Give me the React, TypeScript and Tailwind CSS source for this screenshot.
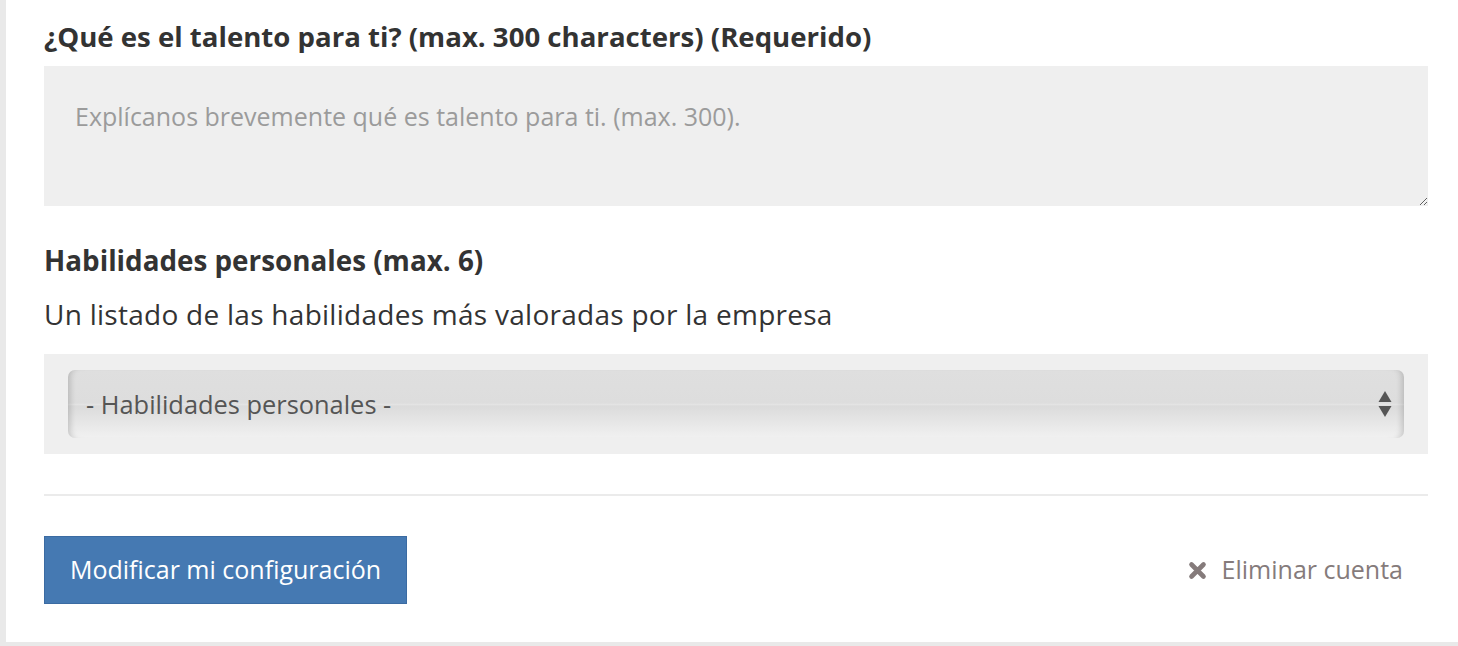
import { useState } from "react";

const font = { fontFamily: "'Open Sans', 'Noto Sans', sans-serif" };

function SortArrows() {
  return (
    <svg width="14" height="28" viewBox="0 0 14 28" className="shrink-0">
      <path d="M7 1 L13.5 12 L0.5 12 Z" fill="#555" />
      <path d="M0.5 16 L13.5 16 L7 27 Z" fill="#555" />
    </svg>
  );
}

function CloseIcon() {
  return (
    <svg width="19" height="19" viewBox="0 0 19 19" className="shrink-0">
      <path
        d="M3.5 3.5 L15.5 15.5 M15.5 3.5 L3.5 15.5"
        stroke="#857b7b"
        strokeWidth="4.6"
        strokeLinecap="round"
      />
    </svg>
  );
}

export default function App() {
  const [talent, setTalent] = useState("");

  return (
    <div className="h-[646px] w-full overflow-hidden bg-[#e9e9e9] pl-[6px]" style={font}>
      <div className="bg-white pl-[38px] pr-[30px] pt-[18px] pb-[38px] text-[#333]">
        {/* talent */}
        <h2 className="text-[27.6px] font-bold leading-[36px]">
          ¿Qué es el talento para ti? (max. 300 characters) (Requerido)
        </h2>
        <textarea
          value={talent}
          onChange={(e) => setTalent(e.target.value)}
          placeholder="Explícanos brevemente qué es talento para ti. (max. 300)."
          className="mt-[12px] block h-[140px] w-full bg-[#efefef] pl-[31px] pr-4 pt-[35px] text-[25px] leading-[30px] text-[#333] outline-none placeholder:text-[#9b9b9b]"
        />

        {/* skills */}
        <h2 className="mt-[36px] text-[27.8px] font-bold leading-[36px]">
          Habilidades personales (max. 6)
        </h2>
        <p className="mt-[18px] text-[28px] leading-[36px] tracking-[0.27px]">
          Un listado de las habilidades más valoradas por la empresa
        </p>
        <div className="mt-[22px] h-[100px] bg-[#efefef] px-[24px] pt-[16px]">
          <div className="flex h-[68px] items-center justify-between rounded-[7px] bg-[linear-gradient(to_bottom,#dfdfdf_0%,#dddddd_49%,#e6e6e6_50%,#dbdbdb_53%,#f1f1f1_100%)] pl-[18px] pr-[12px] shadow-[inset_7px_0_6px_-5px_rgba(0,0,0,0.18),inset_-7px_0_6px_-5px_rgba(0,0,0,0.18)]">
            <span className="text-[25.4px] text-[#555]">- Habilidades personales -</span>
            <SortArrows />
          </div>
        </div>

        <hr className="mt-[40px] border-0 border-t-2 border-[#ebebeb]" />

        {/* actions */}
        <div className="mt-[40px] flex items-center justify-between">
          <button className="h-[68px] w-[363px] border border-[#3b6ba2] bg-[#4579b2] text-[25px] text-white">
            Modificar mi configuración
          </button>
          <a href="#" className="mr-[25px] flex items-center gap-[15px] text-[25px] text-[#857b7b]">
            <CloseIcon />
            Eliminar cuenta
          </a>
        </div>
      </div>
    </div>
  );
}
